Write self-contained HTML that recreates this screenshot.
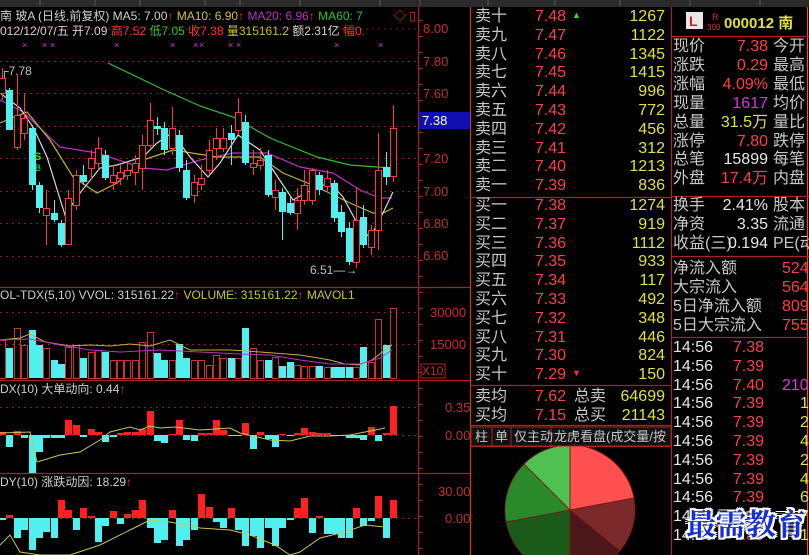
<!DOCTYPE html>
<html><head><meta charset="utf-8"><style>
body{margin:0;background:#000;width:809px;height:555px;overflow:hidden;position:relative;font-family:"Liberation Sans","Noto Sans CJK SC",sans-serif}
.a{position:absolute;white-space:nowrap}
.ob{font-size:16px;line-height:19px;height:19px}
.g{color:#c8c8c8}.r{color:#ff4040}.y{color:#e0e040}.m{color:#e030e0}.w{color:#e8e8e8}
.rt{text-align:right}
</style></head><body>
<svg id="s" width="809" height="555" style="position:absolute;left:0;top:0" font-family="Liberation Sans, Noto Sans CJK SC, sans-serif">
<rect x="0" y="0" width="809" height="7" fill="#2a2a2a"/>
<g stroke="#555" stroke-width="1"><line x1="40" y1="0" x2="40" y2="6"/><line x1="95" y1="0" x2="95" y2="6"/><line x1="140" y1="0" x2="140" y2="6"/><line x1="205" y1="0" x2="205" y2="6"/><line x1="240" y1="0" x2="240" y2="6"/><line x1="300" y1="0" x2="300" y2="6"/><line x1="380" y1="0" x2="380" y2="6"/><line x1="420" y1="0" x2="420" y2="6"/><line x1="488" y1="0" x2="488" y2="6"/><line x1="555" y1="0" x2="555" y2="6"/><line x1="620" y1="0" x2="620" y2="6"/><line x1="690" y1="0" x2="690" y2="6"/><line x1="760" y1="0" x2="760" y2="6"/></g>
<g id="grid" stroke="#8a2020" stroke-dasharray="2,4" stroke-width="1"></g>
<g stroke="#b02020" stroke-width="1.2">
<line x1="418.5" y1="7" x2="418.5" y2="555"/>
<line x1="0" y1="287.5" x2="470" y2="287.5"/>
<line x1="0" y1="380.5" x2="470" y2="380.5"/>
<line x1="0" y1="473.5" x2="470" y2="473.5"/>
<line x1="470.5" y1="7" x2="470.5" y2="555" stroke="#d04010"/>
<line x1="671.5" y1="7" x2="671.5" y2="555"/>
<line x1="807.5" y1="7" x2="807.5" y2="555" stroke="#e06010"/>
<line x1="470" y1="197.5" x2="671" y2="197.5"/>
<line x1="470" y1="385.5" x2="671" y2="385.5"/>
<line x1="470" y1="425.5" x2="671" y2="425.5"/>
<line x1="470" y1="446.5" x2="671" y2="446.5"/>
<line x1="671" y1="36.5" x2="809" y2="36.5"/>
<line x1="671" y1="196.5" x2="809" y2="196.5"/>
<line x1="671" y1="256.5" x2="809" y2="256.5"/>
<line x1="671" y1="337.5" x2="809" y2="337.5"/>
</g>
<g id="ticks" stroke="#b02020"></g>
<g id="ma" fill="none" stroke-width="1.2">
<polyline stroke="#30c030" points="108,63 160,88 200,106 233,117 270,138 317,157 350,165 377,167 393,168"/>
<polyline stroke="#c030c0" points="0,100 23,112 60,147 97,153 143,168 167,170 200,160 233,153 267,153 300,167 333,173 360,190 380,198 392,198"/>
<polyline stroke="#c8b030" points="0,123 27,112 50,140 73,177 97,193 117,183 143,160 173,150 217,157 260,157 283,173 317,187 350,203 373,213 383,213 393,208"/>
<polyline stroke="#d8d8d8" points="0,93 20,108 33,127 47,157 65,215 80,193 100,168 117,165 143,157 157,143 172,133 190,157 208,177 220,163 238,135 260,150 273,170 293,200 317,187 330,183 343,197 357,223 370,238 383,213 393,192"/>
</g>
<g id="cd"></g>
<g id="vol"></g>
<g id="dx"></g>
<g id="ddy"></g>
<polyline fill="none" stroke="#c8b030" stroke-width="1" points="0,340 20,338 30,334 45,342 70,346 90,345 110,346 130,344 150,346 170,340 190,350 230,350 260,352 300,355 330,360 345,364 360,365 372,360 385,350 392,345"/>
<polyline fill="none" stroke="#c030c0" stroke-width="1" points="0,340 30,339 60,345 90,350 120,352 160,350 200,352 240,354 270,355 300,360 330,364 360,364 380,358 392,350"/>
<polyline fill="none" stroke="#c8c850" stroke-width="1" points="0,433 30,432 37,462 60,455 80,452 100,440 110,432 130,427 140,430 150,426 160,428 175,427 200,430 230,428 240,433 270,440 290,441 310,436 330,436 350,435 370,431 385,428"/>
<polyline fill="none" stroke="#c8c850" stroke-width="1" points="0,545 10,535 20,552 40,555 70,555 100,545 130,530 150,520 170,522 200,528 230,530 250,535 275,545 290,555 300,552 320,538 345,532 365,525 385,527"/>
<g font-size="13" fill="#c03030">
<text x="423" y="33">8.00</text><text x="423" y="66">7.80</text><text x="423" y="98">7.60</text><text x="423" y="163">7.20</text><text x="423" y="196">7.00</text><text x="423" y="228">6.80</text><text x="423" y="260">6.60</text>
<text x="430" y="317">30000</text><text x="430" y="349">15000</text>
<text x="445" y="412">0.35</text><text x="445" y="440">0.00</text>
<text x="438" y="496">30.00</text><text x="445" y="523">0.00</text>
</g>
<rect x="421" y="364" width="24" height="14" fill="none" stroke="#b02020"/><text x="422" y="375" font-size="12" fill="#c03030">X10</text>
<rect x="419" y="112" width="51" height="17" fill="#1010b0"/><text x="422" y="125" font-size="13" fill="#fff">7.38</text>
<g font-size="12">
<text x="0" y="20" fill="#d0d0d0">南 玻A (日线,前复权) MA5: 7.00<tspan fill="#ff3030">↑</tspan> <tspan fill="#d0c040">MA10: 6.90</tspan><tspan fill="#ff3030">↑</tspan> <tspan fill="#c030c0">MA20: 6.96</tspan><tspan fill="#ff3030">↑</tspan> <tspan fill="#30c030">MA60: 7</tspan></text>
<text x="394" y="20" fill="#ff3030">◇ ▯</text>
<text x="0" y="35" fill="#d0d0d0">012/12/07/五 开7.09 <tspan fill="#ff3030">高7.52</tspan> <tspan fill="#30c030">低7.05</tspan> <tspan fill="#ff3030">收7.38</tspan> <tspan fill="#c0c030">量315161.2</tspan> 额2.31亿 <tspan fill="#ff3030">幅0.</tspan></text>
<g fill="#e030e0" font-size="9"><text x="22" y="48">×</text><text x="42" y="48">×</text><text x="50" y="48">×</text><text x="114" y="48">×</text><text x="170" y="48">×</text><text x="193" y="48">×</text><text x="199" y="48">×</text><text x="228" y="48">×</text><text x="236" y="48">×</text><text x="334" y="48">×</text><text x="378" y="48">×</text></g>
<text x="0" y="75" fill="#c0c0c0">┌7.78</text>
<text x="310" y="274" fill="#c0c0c0">6.51—→</text>
<text x="34" y="160" fill="#30e030" font-size="11" font-weight="bold">S</text><text x="35" y="171" fill="#30e030" font-size="9">B</text>
<text x="0" y="299" fill="#d0d0d0">OL-TDX(5,10) VVOL: 315161.22<tspan fill="#ff3030">↑</tspan>  <tspan fill="#c8c830">VOLUME: 315161.22</tspan><tspan fill="#ff3030">↑</tspan>  <tspan fill="#c8c830">MAVOL1</tspan></text>
<text x="0" y="393" fill="#d0d0d0">DX(10) 大单动向: 0.44<tspan fill="#ff3030">↑</tspan></text>
<text x="0" y="486" fill="#d0d0d0">DY(10) 涨跌动因: 18.29<tspan fill="#ff3030">↑</tspan></text>
</g>
<g stroke="#801010" stroke-width="0.8">
<path d="M570,510 L570,445 A65,65 0 0 1 634,498 Z" fill="#ff5050"/>
<path d="M570,510 L634,498 A65,65 0 0 1 620,551 Z" fill="#7a2a2a"/>
<path d="M570,510 L620,551 A65,65 0 0 1 570,575 Z" fill="#4a1818"/>
<path d="M570,510 L570,575 A65,65 0 0 1 506,522 Z" fill="#1a5a1a"/>
<path d="M570,510 L506,522 A65,65 0 0 1 524,464 Z" fill="#2a8a2a"/>
<path d="M570,510 L524,464 A65,65 0 0 1 570,445 Z" fill="#50c050"/>
</g>
<g stroke="#b02020" fill="#111"><rect x="471" y="427" width="21" height="19"/><rect x="492" y="427" width="19" height="19"/><rect x="511" y="427" width="40" height="19"/><rect x="551" y="427" width="120" height="19"/></g>
<g font-size="13" fill="#c8c8c8"><text x="475" y="441">柱</text><text x="495" y="441">单</text><text x="514" y="441">仅主动</text><text x="554" y="441">龙虎看盘(成交量/按</text></g>
<rect x="686" y="12" width="17" height="17" fill="#e8e8e8"/><text x="689" y="26" font-size="14" font-weight="bold" fill="#d02020">L</text>
<text x="712" y="20" font-size="9" fill="#d03030">R</text><text x="707" y="30" font-size="8" fill="#d03030">300</text>
<text x="724" y="28" font-size="15" font-weight="bold" fill="#e0e040">000012 南</text>
</svg>

<div id="ob"></div>
<div class="a" style="left:686px;top:500px;font-size:30px;font-weight:bold;color:#1530d0;font-family:'Noto Serif CJK SC','WenQuanYi Zen Hei',serif;text-shadow:2px 0 #fff,-2px 0 #fff,0 2px #fff,0 -2px #fff,2px 2px #fff,-2px -2px #fff,2px -2px #fff,-2px 2px #fff">最需教育</div>

<script>
var NS="http://www.w3.org/2000/svg";
function el(p,t,a){var e=document.createElementNS(NS,t);for(var k in a)e.setAttribute(k,a[k]);document.getElementById(p).appendChild(e);return e;}
[28.5,61,93,126,158,191,223,256].forEach(function(y){el("grid","line",{x1:0,x2:418,y1:y+.5,y2:y+.5});});
[312,344,407,435,518].forEach(function(y){el("grid","line",{x1:0,x2:418,y1:y+.5,y2:y+.5});});
for(var y=20;y<555;y+=16)el("ticks","line",{x1:418,x2:423,y1:y+.5,y2:y+.5});
var C=[["r",78,93,68,100],["c",90,130,88,130],["r",115,147,75,150],["r",118,133,93,140],["c",128,185,125,190],["c",185,208,182,213],["r",208,215,190,245],["c",213,220,200,222],["c",223,245,220,247],["r",198,244,190,245],["r",175,205,170,210],["c",175,182,165,185],["r",158,168,150,180],["r",148,163,137,170],["c",155,178,150,180],["r",175,182,165,190],["r",172,178,165,185],["r",170,175,162,180],["r",163,172,155,185],["r",145,168,135,190],["r",120,145,103,148],["c",126,129,117,135],["c",128,150,122,155],["r",128,148,107,155],["c",135,168,130,172],["c",170,198,160,200],["r",182,195,175,203],["r",178,184,165,190],["r",150,170,140,175],["r",138,148,128,160],["r",138,148,128,152],["c",133,140,125,165],["r",112,130,98,135],["c",122,163,115,165],["r",163,167,150,175],["r",160,165,148,170],["c",155,195,150,197],["r",190,197,180,210],["c",192,212,188,240],["c",203,213,197,215],["r",200,213,188,230],["r",185,200,170,205],["r",170,200,168,205],["c",175,190,172,195],["r",178,186,170,192],["c",183,218,180,222],["c",212,232,205,237],["c",228,262,222,265],["r",220,262,188,268],["c",217,245,205,248],["r",230,247,225,255],["r",170,230,133,250],["c",167,177,152,185],["r",128,176,105,182]];
var n=C.length,sp=391/(n-1);
C.forEach(function(c,i){var x=Math.round(2+i*sp);var col=c[0]=="r"?"#ff3838":"#50f0f0";
el("cd","line",{x1:x+.5,x2:x+.5,y1:c[3],y2:c[4],stroke:col});
if(c[0]=="r")el("cd","rect",{x:x-2.5,y:c[1]+.5,width:6,height:Math.max(1,c[2]-c[1]),fill:"#000",stroke:col});
else el("cd","rect",{x:x-3,y:c[1],width:7,height:Math.max(1,c[2]-c[1]),fill:col});
});
var V=[340,348,328,345,330,345,348,360,364,347,345,358,352,350,352,360,360,360,360,342,332,353,360,360,344,358,360,360,365,355,358,358,358,328,348,360,360,357,366,362,365,366,366,366,367,367,367,367,367,347,362,360,319,345];
V[n-1]=308;V[n-2]=345;V[n-3]=319;
C.forEach(function(c,i){var x=Math.round(2+i*sp),t=V[i]||360;
if(c[0]=="r")el("vol","rect",{x:x-2.5,y:t+.5,width:6,height:378-t,fill:"none",stroke:"#d03030"});
else el("vol","rect",{x:x-3,y:t,width:7,height:378-t,fill:"#50f0f0"});});
var D=[3,-12,4,-3,-38,-17,-3,-3,-3,15,10,-2,6,3,-7,-2,2,3,3,6,24,-6,-8,1,15,-5,-6,2,2,15,5,-1,-1,12,-14,3,-4,-12,1,-1,2,7,3,2,2,-1,-1,-3,-3,-5,8,-6,2,29,-10,34];
var E=[-2,3,-20,-12,-32,-20,-14,-20,18,8,-12,10,2,-24,-8,7,-6,4,8,18,-10,-25,-22,8,-28,-22,-12,24,11,-4,-10,10,-12,-28,-18,-30,-10,-28,-10,-2,10,20,-15,2,-16,-16,-20,-20,10,-8,-3,22,-20,18,-15,16];
function bars(g,arr,base){arr.forEach(function(v,i){if(i>=n)return;var x=Math.round(2+i*sp);
if(v>=0)el(g,"rect",{x:x-3,y:base-v,width:7,height:Math.max(1,v),fill:"#ff2020"});
else el(g,"rect",{x:x-3,y:base,width:7,height:-v,fill:"#50f0f0"});});}
bars("dx",D,435);bars("ddy",E,518);
var ob=document.getElementById("ob"),h="";
function t(x,y,cls,s,w,al){h+='<div class="a ob '+cls+'" style="left:'+x+'px;top:'+y+'px;'+(w?'width:'+w+'px;text-align:right':'')+'">'+s+'</div>';}
var sl=["卖十","卖九","卖八","卖七","卖六","卖五","卖四","卖三","卖二","卖一"],sp2=["7.48","7.47","7.46","7.45","7.44","7.43","7.42","7.41","7.40","7.39"],sv=["1267","1122","1345","1415","996","772","456","312","1213","836"];
var bl=["买一","买二","买三","买四","买五","买六","买七","买八","买九","买十"],bp=["7.38","7.37","7.36","7.35","7.34","7.33","7.32","7.31","7.30","7.29"],bv=["1274","919","1112","933","117","492","348","446","824","150"];
for(var i=0;i<10;i++){var y=7+i*18.8;t(475,y,"g",sl[i]);t(510,y,"r",sp2[i],56);t(600,y,"y",sv[i],65);
var y2=196+i*18.8;t(475,y2,"g",bl[i]);t(510,y2,"r",bp[i],56);t(600,y2,"y",bv[i],65);}
h+='<div class="a" style="left:572px;top:10px;color:#30e030;font-size:9px">▲</div><div class="a" style="left:572px;top:368px;color:#ff3030;font-size:9px">▼</div>';
t(475,387,"g","卖均");t(510,387,"r","7.62",56);t(574,387,"g","总卖");t(600,387,"y","64699",65);
t(475,406,"g","买均");t(510,406,"r","7.15",56);t(574,406,"g","总买");t(600,406,"y","21143",65);
var L=[["现价","r","7.38","今开"],["涨跌","r","0.29","最高"],["涨幅","r","4.09%","最低"],["现量","m","1617","均价"],["总量","y","31.5万","量比"],["涨停","r","7.80","跌停"],["总笔","w","15899","每笔"],["外盘","r","17.4万","内盘"]];
L.forEach(function(r,i){var y=37+i*18.9;t(673,y,"g",r[0]);t(700,y,r[1],r[2],68);t(773,y,"g",r[3]);});
var L2=[["换手","2.41%","股本"],["净资","3.35","流通"],["收益(三)","0.194","PE(动"]];
L2.forEach(function(r,i){var y=196+i*18.9;t(673,y,"g",r[0]);t(700,y,"w",r[1],68);t(773,y,"g",r[2]);});
var L3=[["净流入额","524"],["大宗流入","564"],["5日净流入额","809"],["5日大宗流入","755"]];
L3.forEach(function(r,i){var y=259+i*18.9;t(673,y,"g",r[0]);t(782,y,"r",r[1]);});
var P=["7.38","7.39","7.40","7.39","7.39","7.39","7.39","7.39","7.39","7.39","7.39"],Q=[["",""],["",""],["m","210"],["y","1"],["y","2"],["y","4"],["y","2"],["y","4"],["y","6"],["y","7"],["y","1"]];
for(var i=0;i<11;i++){var y=338+i*18.8;t(673,y,"w","14:56");t(710,y,"r",P[i],54);if(Q[i][1])t(i==2?782:800,y,Q[i][0],Q[i][1]);}
ob.innerHTML=h;
</script>
</body></html>
